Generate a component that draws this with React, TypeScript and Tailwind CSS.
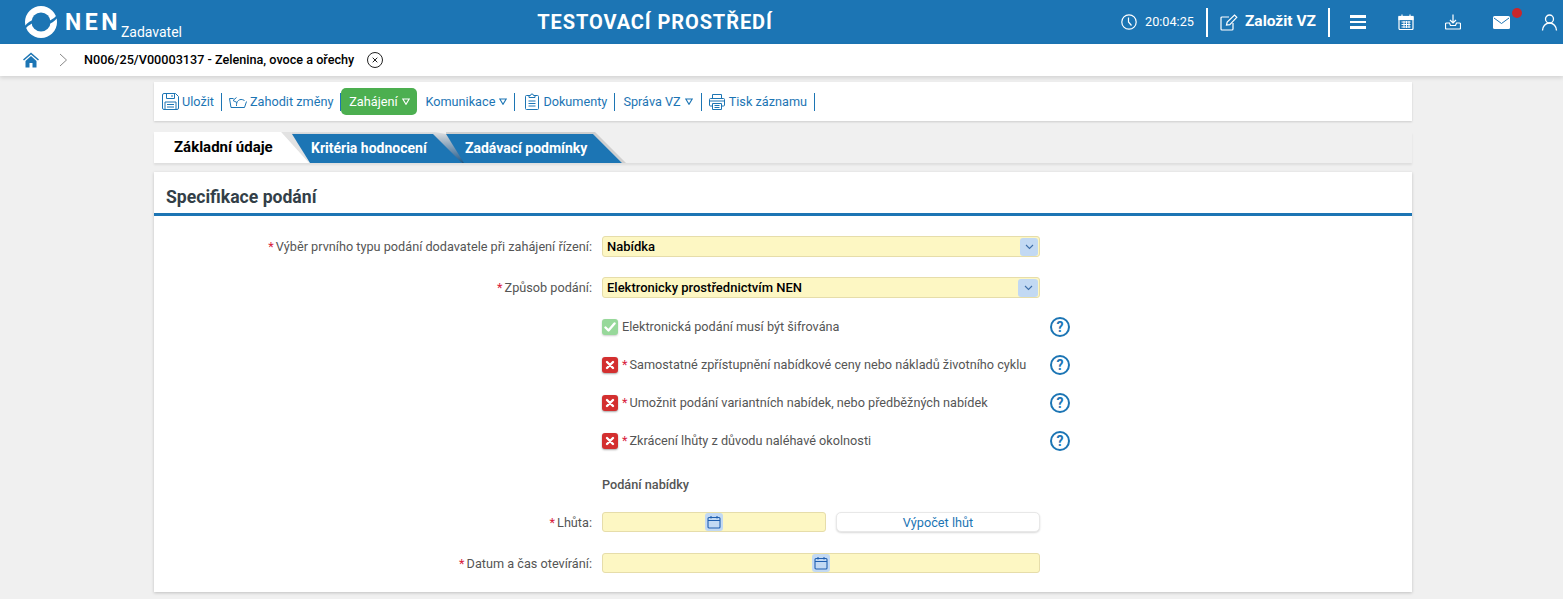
import { ReactNode } from "react";

const BLUE = "#1c75b4";

function Tri() {
  return (
    <svg width="8" height="7" viewBox="0 0 8 7" fill="none" stroke="currentColor" strokeWidth="1.1" className="ml-1">
      <path d="M.8 1h6.400L4 6.300z" />
    </svg>
  );
}

function Sep() {
  return <div className="w-px h-[18px] bg-[#1c75b4] shrink-0" />;
}

function Question() {
  return (
    <div className="w-[20px] h-[20px] rounded-full border-2 border-[#1c75b4] flex items-center justify-center text-[#1c75b4] text-[14px] font-bold leading-none shrink-0">
      ?
    </div>
  );
}

function CrossBox() {
  return (
    <div className="w-[16px] h-[16px] rounded-[3px] bg-[#d32f2f] shadow-[0_1px_2px_rgba(0,0,0,0.35)] flex items-center justify-center shrink-0">
      <svg width="10" height="10" viewBox="0 0 10 10" stroke="white" strokeWidth="2.4" strokeLinecap="round">
        <path d="M2 2l6 6M8 2l-6 6" />
      </svg>
    </div>
  );
}

function CheckBox() {
  return (
    <div className="w-[16px] h-[16px] rounded-[3px] bg-[#97d89a] shadow-[0_1px_2px_rgba(0,0,0,0.2)] flex items-center justify-center shrink-0">
      <svg width="12" height="10" viewBox="0 0 12 10" fill="none" stroke="white" strokeWidth="2.4" strokeLinecap="round" strokeLinejoin="round">
        <path d="M1.5 5.5l3 3 6-7" />
      </svg>
    </div>
  );
}

function Calendar() {
  return (
    <div className="w-[18px] h-[18px] rounded-[3px] bg-[#c2d9f3] flex items-center justify-center">
      <svg width="14" height="14" viewBox="0 0 14 14" fill="none" stroke="#1f5fb0" strokeWidth="1.1">
        <rect x="1" y="2.5" width="12" height="10.5" rx="1" />
        <path d="M1 5.5h12M4 1v2.5M10 1v2.5" />
      </svg>
    </div>
  );
}

function Chevron({ w }: { w: string }) {
  return (
    <div className={`${w} h-[18px] rounded-[3px] bg-[#c2d9f3] flex items-center justify-center mr-px`}>
      <svg width="9" height="6" viewBox="0 0 9 6" fill="none" stroke="#3d6ea8" strokeWidth="1.1">
        <path d="M1 1l3.5 3.5L8 1" />
      </svg>
    </div>
  );
}

function Label({ children }: { children: ReactNode }) {
  return (
    <div className="w-[438px] shrink-0 text-right text-[12.7px] text-[#555]">
      <span className="text-[#d8203c] mr-[2px]">*</span>
      {children}:
    </div>
  );
}

function SelectBox({ value, chevron }: { value: string; chevron: string }) {
  return (
    <div className="w-[438px] h-[21px] rounded-[3px] bg-[#fdf7c3] border border-[#e6ddaa] flex items-center justify-between pl-1 text-[13px] font-medium text-black">
      <span>{value}</span>
      <Chevron w={chevron} />
    </div>
  );
}

function CheckRow({ text, ok, req = true }: { text: string; ok?: boolean; req?: boolean }) {
  return (
    <div className="h-[38px] flex items-center pl-[448px]">
      <div className="w-[448px] flex items-center text-[12.7px] text-[#555]">
        {ok ? <CheckBox /> : <CrossBox />}
        <span className="ml-1">
          {req && <span className="text-[#d8203c] mr-[2px]">*</span>}
          {text}
        </span>
      </div>
      <Question />
    </div>
  );
}

function TopBar() {
  return (
    <header className="h-[44px] bg-[#1c75b4] text-white flex items-center">
      <div className="w-[537px] shrink-0 flex items-center pl-[25px] h-full">
        <svg width="32" height="32" viewBox="0 0 32 32">
          <circle cx="16" cy="16" r="16" fill="white" />
          <circle cx="16" cy="16" r="9.500" fill={BLUE} />
          <path fill={BLUE} d="M-1 21C2 17 5.500 14.500 9 13.500L7 17.500 3 20 0 23zM33 11C30 15 26.500 17.500 23 18.500L25 14.500 29 12 32 9z" />
        </svg>
        <span className="ml-2 text-[23px] font-bold tracking-[3.500px] leading-none">NEN</span>
        <span className="text-[14px] mt-[19px] leading-none">Zadavatel</span>
      </div>
      <div className="w-[236px] shrink-0 text-center whitespace-nowrap text-[20px] font-bold tracking-[0.9px]">TESTOVACÍ PROSTŘEDÍ</div>
      <div className="ml-auto flex items-center h-full pr-[5px]">
        <svg width="16" height="16" viewBox="0 0 16 16" fill="none" stroke="white" strokeWidth="1.2">
          <circle cx="8" cy="8" r="7.2" />
          <path d="M7.5 3.5V8l3 3.5" />
        </svg>
        <span className="ml-2 text-[12.7px]">20:04:25</span>
        <div className="w-[2px] h-[29px] bg-white ml-3" />
        <svg width="18" height="17" viewBox="0 0 18 17" fill="none" stroke="white" strokeWidth="1.2" className="ml-3">
          <path d="M9 3H2a1 1 0 0 0-1 1v11a1 1 0 0 0 1 1h10a1 1 0 0 0 1-1V9" />
          <path d="M6.5 11l.7-3L14.5 1l2.3 2.3-7 7.3z" />
        </svg>
        <span className="ml-[7px] text-[15.500px] font-bold">Založit VZ</span>
        <div className="w-[2px] h-[29px] bg-white ml-3" />
        <div className="ml-5 flex flex-col gap-[3px]">
          <div className="w-[16px] h-[2.500px] bg-white" />
          <div className="w-[16px] h-[2.500px] bg-white" />
          <div className="w-[16px] h-[2.500px] bg-white" />
        </div>
        <svg width="16" height="16" viewBox="0 0 16 16" className="ml-8" fill="none" stroke="white" strokeWidth="1.2">
          <rect x="1" y="2.5" width="14" height="13" rx="1" />
          <path d="M4 0.5v3M12 0.5v3" />
          <rect x="1" y="2.5" width="14" height="3" fill="white" />
          <path d="M3.5 8h9M3.5 10.5h9M3.5 13h9M6 7v7M8.5 7v7M11 7v7" strokeWidth="1" />
        </svg>
        <svg width="16" height="16" viewBox="0 0 16 16" className="ml-[31px]" fill="none" stroke="white" strokeWidth="1.2">
          <path d="M8 0.5v8M5 6l3 3 3-3" />
          <path d="M4.5 9H1.5a1 1 0 0 0-1 1v4a1 1 0 0 0 1 1h13a1 1 0 0 0 1-1v-4a1 1 0 0 0-1-1h-3l-1 2.5H5.500z" />
        </svg>
        <div className="relative ml-8">
          <svg width="17" height="13" viewBox="0 0 17 13" className="block">
            <rect width="17" height="13" rx="1.5" fill="white" />
            <path d="M1 2l7.500 5.500L16 2" fill="none" stroke="#1c75b4" strokeWidth="1" />
          </svg>
          <div className="absolute w-[10px] h-[10px] rounded-full bg-[#c9272b] top-[-8px] left-[19px]" />
        </div>
        <svg width="17" height="17" viewBox="0 0 17 17" className="ml-[31px]" fill="none" stroke="white" strokeWidth="1.3">
          <circle cx="8.5" cy="5" r="4" />
          <path d="M1.500 16.500c0-4 3-7.500 7-7.500s7 3.500 7 7.500" />
        </svg>
      </div>
    </header>
  );
}

function Crumbs() {
  return (
    <div className="h-[32px] bg-white shadow-[0_2px_4px_rgba(0,0,0,0.12)] flex items-center relative">
      <svg width="16" height="16" viewBox="0 0 16 16" className="ml-[23px]" fill={BLUE}>
        <path d="M8 0.500L0 7.500l1 1L8 2.500l7 6 1-1z" />
        <path d="M2.500 9L8 4l5.500 5v6.500H9.500V11h-3v4.500h-4z" />
      </svg>
      <svg width="9" height="14" viewBox="0 0 9 14" className="ml-[20px]" fill="none" stroke="#888" strokeWidth="1">
        <path d="M1 1l6.500 6L1 13" />
      </svg>
      <span className="ml-[16px] text-[12.650px] font-medium text-black">N006/25/V00003137 - Zelenina, ovoce a ořechy</span>
      <svg width="16" height="16" viewBox="0 0 16 16" className="ml-[13px]" fill="none" stroke="#222" strokeWidth="1">
        <circle cx="8" cy="8" r="7.500" />
        <path d="M5.700 5.700l4.600 4.600M10.300 5.700l-4.600 4.600" />
      </svg>
    </div>
  );
}

function Toolbar() {
  return (
    <div className="h-[39px] bg-white shadow-[0_1px_2px_rgba(0,0,0,0.15)] flex items-center pl-[8px] text-[12.700px] text-[#1c75b4]">
      <svg width="17" height="17" viewBox="0 0 17 17" fill="none" stroke={BLUE} strokeWidth="1">
        <path d="M2 .5h11.500l3 3V15a1.500 1.500 0 0 1-1.500 1.500H2A1.500 1.500 0 0 1 .5 15V2A1.500 1.500 0 0 1 2 .5z" />
        <path d="M4.500.5v5h8v-5M10 2v2M3 16.500V9h11v7.500M5 11.500h7M5 14h7" />
      </svg>
      <span className="ml-[3px]">Uložit</span>
      <div className="ml-[7px]"><Sep /></div>
      <svg width="18" height="13" viewBox="0 0 18 13" fill="none" stroke={BLUE} strokeWidth="1" className="ml-[7px]">
        <path d="M4.500 3.500H.5l1.500 9h13.500l2-6" />
        <path d="M7.500 11c-.5-4.500 3-8.500 8-5.500M7.500 2.500L4 5.500l4 2" />
      </svg>
      <span className="ml-[3px]">Zahodit změny</span>
      <div className="ml-[7px]"><Sep /></div>
      <div className="h-[27px] w-[76px] rounded-[5px] bg-[#4caf50] text-white flex items-center justify-center">
        Zahájení
        <Tri />
      </div>
      <span className="ml-[8px]">Komunikace</span>
      <Tri />
      <div className="ml-[7px]"><Sep /></div>
      <svg width="14" height="17" viewBox="0 0 14 17" fill="none" stroke={BLUE} strokeWidth="1" className="ml-[10px]">
        <path d="M4 2.500H1.500a1 1 0 0 0-1 1V15.500a1 1 0 0 0 1 1h11a1 1 0 0 0 1-1V3.500a1 1 0 0 0-1-1H10" />
        <path d="M4 4.500V2.500h1.500a1.500 1.500 0 0 1 3 0H10v2zM3.500 8h7M3.500 10.500h7M3.500 13h7" />
      </svg>
      <span className="ml-[4px]">Dokumenty</span>
      <div className="ml-[7px]"><Sep /></div>
      <span className="ml-[8px]">Správa VZ</span>
      <Tri />
      <div className="ml-[8px]"><Sep /></div>
      <svg width="16" height="16" viewBox="0 0 16 16" fill="none" stroke={BLUE} strokeWidth="1" className="ml-[7px]">
        <path d="M3.500 4.500V.5h9v4M3.500 12H1.500a1 1 0 0 1-1-1V5.500a1 1 0 0 1 1-1h13a1 1 0 0 1 1 1V11a1 1 0 0 1-1 1h-2" />
        <path d="M3.500 9.500h9v6h-9zM5.500 11.500h5M5.500 13.500h5M1 7h14" />
      </svg>
      <span className="ml-[4px]">Tisk záznamu</span>
      <div className="ml-[7px]"><Sep /></div>
    </div>
  );
}

function Tabs() {
  return (
    <div className="h-[31px] mt-[11px] flex items-end shadow-[0_2px_2px_rgba(0,0,0,0.08)]">
      <div className="relative w-[138px] h-[31px] shrink-0">
        <div className="absolute inset-y-0 left-0 w-[155px] bg-[#e2e2e2] [clip-path:polygon(127px_0,140px_0,155px_31px)]" />
        <div className="absolute inset-y-0 left-0 w-[155px] bg-white [clip-path:polygon(0_0,127px_0,155px_31px,0_31px)] flex items-center pl-[20px] text-[15px] font-bold text-black">
          Základní údaje
        </div>
      </div>
      <div className="relative w-[154px] h-[29px] shrink-0">
        <div className="absolute top-[-2px] left-0 h-[31px] w-[174px] bg-linear-to-b from-[#e0e0e0] to-[#1a5a8a] [clip-path:polygon(0_0,143px_0,154px_2px,174px_31px,170px_31px,0_2px)]" />
        <div className="absolute inset-y-0 left-0 w-[170px] bg-[#1c75b4] [clip-path:polygon(0_0,141px_0,170px_29px,18px_29px)] flex items-center pl-[19px] text-[14px] font-bold text-white">
          Kritéria hodnocení
        </div>
      </div>
      <div className="relative w-[176px] h-[29px] shrink-0">
        <div className="absolute top-[-2px] left-0 h-[31px] w-[180px] bg-[#cfcfcf] [clip-path:polygon(0_0,149px_0,180px_31px,176px_31px,147px_2px,0_2px)]" />
        <div className="absolute inset-y-0 left-0 w-[176px] bg-[#1c75b4] [clip-path:polygon(0_0,147px_0,176px_29px,18px_29px)] flex items-center pl-[19px] text-[14px] font-bold text-white">
          Zadávací podmínky
        </div>
      </div>
    </div>
  );
}

export default function App() {
  return (
    <div className="h-[599px] bg-[#f0f0f0] font-['Roboto',sans-serif] overflow-hidden">
      <TopBar />
      <Crumbs />
      <main className="w-[1258px] ml-[154px] pt-[6px]">
        <Toolbar />
        <Tabs />
        <section className="mt-[9px] h-[420px] bg-white shadow-[0_1px_3px_rgba(0,0,0,0.2)]">
          <h2 className="h-[44px] border-b-[3px] border-[#1c75b4] pl-[12px] pt-[10px] flex items-center text-[17.600px] font-bold text-[#333f48]">
            Specifikace podání
          </h2>
          <div className="pt-[20px]">
            <div className="flex items-center gap-[10px] h-[21px]">
              <Label>Výběr prvního typu podání dodavatele při zahájení řízení</Label>
              <SelectBox value="Nabídka" chevron="w-[18px]" />
            </div>
            <div className="flex items-center gap-[10px] h-[21px] mt-[20px]">
              <Label>Způsob podání</Label>
              <SelectBox value="Elektronicky prostřednictvím NEN" chevron="w-[20px]" />
            </div>
            <div className="mt-[10px]">
              <CheckRow ok req={false} text="Elektronická podání musí být šifrována" />
              <CheckRow text="Samostatné zpřístupnění nabídkové ceny nebo nákladů životního cyklu" />
              <CheckRow text="Umožnit podání variantních nabídek, nebo předběžných nabídek" />
              <CheckRow text="Zkrácení lhůty z důvodu naléhavé okolnosti" />
            </div>
            <div className="mt-[15px] pl-[448px] text-[12.700px] font-medium text-[#555]">Podání nabídky</div>
            <div className="flex items-center gap-[10px] h-[20px] mt-[18px]">
              <Label>Lhůta</Label>
              <div className="w-[224px] h-[20px] rounded-[3px] bg-[#fdf7c3] border border-[#e6ddaa] flex items-center justify-center">
                <Calendar />
              </div>
              <div className="w-[204px] h-[20px] rounded-[5px] bg-white border border-[#e8e8e8] shadow-[0_1px_2px_rgba(0,0,0,0.15)] flex items-center justify-center text-[12.700px] text-[#1c75b4]">
                Výpočet lhůt
              </div>
            </div>
            <div className="flex items-center gap-[10px] h-[20px] mt-[21px]">
              <Label>Datum a čas otevírání</Label>
              <div className="w-[438px] h-[20px] rounded-[3px] bg-[#fdf7c3] border border-[#e6ddaa] flex items-center justify-center">
                <Calendar />
              </div>
            </div>
          </div>
        </section>
      </main>
    </div>
  );
}
